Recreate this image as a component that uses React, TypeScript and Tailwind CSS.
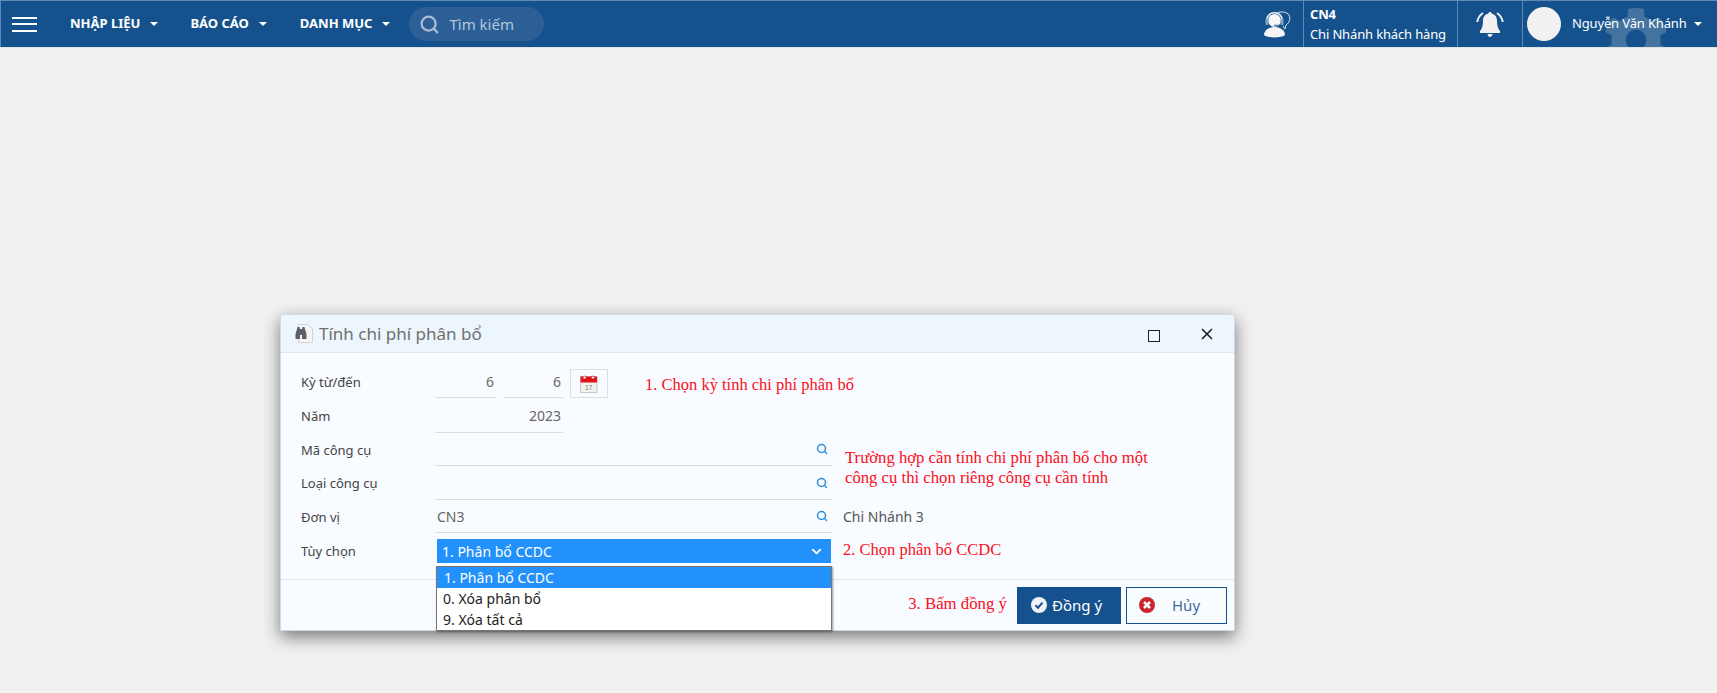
import { ChevronDown, Search, X } from "lucide-react";
import { FaCog } from "react-icons/fa";

const uiFont = "font-['Noto_Sans',sans-serif]";

function Caret() {
  return <span className="ml-[10px] inline-block h-0 w-0 border-x-[4px] border-t-[4px] border-x-transparent border-t-white" />;
}

function SupportIcon() {
  return (
    <svg width="28" height="27" viewBox="0 0 28 27" fill="none">
      <path d="M14 2c4-2 10-1 12 2 2 4 0 8-3 10l-1 4-2-3" stroke="#dbe6f0" strokeWidth="1" />
      <circle cx="11.500" cy="9.500" r="6.500" fill="#f4f6f8" />
      <path d="M3.500 10c0-11 16-11 16 0" stroke="#e7eef5" strokeWidth="1.600" />
      <rect x="2.500" y="8" width="3" height="6" rx="1.200" fill="#7fa2c4" />
      <rect x="17.500" y="8" width="3" height="6" rx="1.200" fill="#7fa2c4" />
      <path d="M11 14.500h5" stroke="#4d7eab" strokeWidth="1.500" />
      <path d="M1 24c0-5 5-8 10.500-8S22 19 22 24c-3 3.200-18 3.200-21 0Z" fill="#f4f6f8" />
    </svg>
  );
}

function BellIcon() {
  return (
    <svg width="28" height="27" viewBox="0 0 28 27" fill="#f1f1f1">
      <path d="M14 1c1 0 1.600.6 1.700 1.500 3.500.8 5.300 3.700 5.300 7.500 0 5 1.200 8 3 10v2H4v-2c1.800-2 3-5 3-10 0-3.800 1.800-6.700 5.300-7.500.1-.9.700-1.500 1.700-1.500Z" />
      <path d="M11.500 23h5c-.3 1.900-1.300 3-2.500 3s-2.200-1.100-2.500-3Z" />
      <path d="M7 2C4 4 1.800 7 1.300 11M21 2c3 2 5.200 5 5.700 9" stroke="#f1f1f1" strokeWidth="2" fill="none" />
    </svg>
  );
}

function DocIcon() {
  return (
    <svg width="18" height="19" viewBox="0 0 18 19">
      <path d="M3.500 .5h9.500l4.500 4.500v13.500h-14Z" fill="#f5f6f5" stroke="#d2d3cf" />
      <path d="M.5 10l1.500-5 .5-2h2l.5 2h2l.5-2h2l.5 2 1.500 5v5H7V11H5v4H.5Z" fill="#5d6166" />
    </svg>
  );
}

function CalendarIcon() {
  return (
    <svg width="18" height="18" viewBox="0 0 18 18">
      <rect x=".5" y="1.500" width="16.500" height="16" fill="#f1f1ee" stroke="#c8c8c8" />
      <rect x=".5" y="1.500" width="16.500" height="6" fill="#e3131c" />
      <circle cx="4.500" cy="2.500" r="1.500" fill="#fff" stroke="#b20d14" strokeWidth=".6" />
      <circle cx="13" cy="2.500" r="1.500" fill="#fff" stroke="#b20d14" strokeWidth=".6" />
      <text x="8.700" y="15" fontSize="6.500" textAnchor="middle" fill="#777" fontFamily="Liberation Sans, sans-serif">17</text>
    </svg>
  );
}

function NavBar() {
  return (
    <header className="flex h-[47px] items-center border-l border-t border-[#5f8ab3] bg-[#15528d] text-white">
      <div className="ml-[11px] flex h-[15px] w-[25px] flex-col justify-between">
        <span className="h-[2px] bg-white" />
        <span className="h-[2px] bg-white" />
        <span className="h-[2px] bg-white" />
      </div>
      <nav className="ml-[33px] flex items-center text-[13px] font-bold">
        <span className="flex items-center">NHẬP LIỆU<Caret /></span>
        <span className="ml-[32px] flex items-center">BÁO CÁO<Caret /></span>
        <span className="ml-[33px] flex items-center">DANH MỤC<Caret /></span>
      </nav>
      <div className="ml-[19px] flex h-[34px] w-[135px] items-center rounded-[17px] bg-[#2b5f96] pl-[10px] text-[15px] text-[#b4c7dc]">
        <Search size={21} strokeWidth={2.5} className="text-[#a9bed5]" />
        <span className="ml-[9px]">Tìm kiếm</span>
      </div>
      <div className="relative ml-auto flex h-full items-center">
        <div className="mr-[12px] mt-[1px]"><SupportIcon /></div>
        <div className="flex h-full w-[155px] flex-col justify-center border-x border-[#5f8ab3] pl-[6px] text-[13px] leading-[20px] tracking-[-0.15px]">
          <span className="font-bold">CN4</span>
          <span>Chi Nhánh khách hàng</span>
        </div>
        <div className="flex h-full w-[65px] items-center justify-center border-r border-[#5f8ab3]"><BellIcon /></div>
        <div className="relative flex h-full w-[194px] items-center overflow-hidden">
          <FaCog size={66} className="absolute left-[80px] top-[6px] text-[#44739f]" />
          <span className="relative ml-[4px] h-[34px] w-[34px] rounded-full bg-[#f1f1f1]" />
          <span className="relative ml-[11px] text-[13px] tracking-[-0.15px]">Nguyễn Văn Khánh</span>
          <span className="relative -ml-[3px] -mt-[1px] flex"><Caret /></span>
        </div>
      </div>
    </header>
  );
}

function Field({ label, rowClass, value, info }: { label: string; rowClass: string; value?: string; info?: string }) {
  return (
    <div className={`flex items-center ${rowClass}`}>
      <span className="w-[134px] shrink-0 pt-[2px]">{label}</span>
      <div className="flex h-full w-[398px] items-center justify-between border-b border-[#dedede] pl-[2px] pr-[5px]">
        <span className="text-[14px] text-[#666]">{value}</span>
        <Search size={12} strokeWidth={3} className="text-[#2f8fdc]" />
      </div>
      {info && <span className="ml-[10px] text-[14px] text-[#555]">{info}</span>}
    </div>
  );
}

function Dialog() {
  return (
    <div className={`absolute left-[280px] top-[314px] w-[955px] border border-[#cfdbe4] bg-[#f8fbff] text-[13px] text-[#444] shadow-[0_6px_16px_rgba(0,0,0,0.5)] ${uiFont}`}>
      <div className="flex h-[38px] items-center border-b border-[#e2e4e6] bg-[#edf6fd] pl-[14px]">
        <DocIcon />
        <span className="ml-[6px] text-[17px] text-[#6f6f6f]">Tính chi phí phân bổ</span>
        <div className="ml-auto mt-[4px] h-[12px] w-[12px] border-[1.5px] border-[#222]" />
        <X size={18} strokeWidth={2.2} className="ml-[38px] mr-[18px] text-[#222]" />
      </div>

      <div className="relative px-[20px] pb-[10px] pt-[11px]">
        <div className="flex h-[34px] items-center">
          <span className="w-[134px] shrink-0 pt-[4px]">Kỳ từ/đến</span>
          <div className="flex h-full w-[61px] items-center justify-end border-b border-[#dedede] pr-[2px] pt-[1px] text-[14px] text-[#666]">6</div>
          <div className="ml-[7px] flex h-full w-[60px] items-center justify-end border-b border-[#dedede] pr-[2px] pt-[1px] text-[14px] text-[#666]">6</div>
          <div className="ml-[7px] flex h-[29px] w-[38px] items-center justify-center self-end border border-[#dedede]"><CalendarIcon /></div>
          <span className="ml-[37px] pt-[9px] font-['Liberation_Serif',serif] text-[16.5px] text-[#fb0f22]">1. Chọn kỳ tính chi phí phân bổ</span>
        </div>
        <div className="flex h-[35px] items-center">
          <span className="w-[134px] shrink-0 pt-[2px]">Năm</span>
          <div className="flex h-full w-[128px] items-center justify-end border-b border-[#dedede] pr-[2px] text-[14px] text-[#666]">2023</div>
        </div>
        <Field label="Mã công cụ" rowClass="h-[33px]" />
        <Field label="Loại công cụ" rowClass="h-[34px]" />
        <Field label="Đơn vị" rowClass="h-[33px]" value="CN3" info="Chi Nhánh 3" />
        <div className="flex h-[36px] items-center">
          <span className="w-[134px] shrink-0 pt-[2px]">Tùy chọn</span>
          <div className="ml-[2px] flex h-[24px] w-[394px] items-center justify-between bg-[#2391fb] pl-[5px] pr-[7px] text-[14px] text-white">
            <span>1. Phân bổ CCDC</span>
            <ChevronDown size={15} strokeWidth={3} />
          </div>
          <span className="ml-[12px] pb-[2px] font-['Liberation_Serif',serif] text-[16.5px] text-[#fb0f22]">2. Chọn phân bổ CCDC</span>
        </div>

        <p className="absolute left-[564px] top-[95px] font-['Liberation_Serif',serif] text-[16.7px] leading-[20px] text-[#fb0f22]">
          Trường hợp cần tính chi phí phân bổ cho một
          <br />
          công cụ thì chọn riêng công cụ cần tính
        </p>

        <div className="absolute left-[155px] top-[213px] z-10 h-[65px] w-[396px] border border-[#767676] bg-white text-[14px] text-[#222] shadow-[1px_1px_2px_rgba(0,0,0,0.4)]">
          <div className="flex h-[21px] items-center bg-[#2391fb] pl-[7px] text-white">1. Phân bổ CCDC</div>
          <div className="flex h-[21px] items-center pl-[6px]">0. Xóa phân bổ</div>
          <div className="flex h-[21px] items-center pl-[6px]">9. Xóa tất cả</div>
        </div>
      </div>

      <div className="flex h-[51px] items-center justify-end border-t border-[#e2e4e6] pr-[7px]">
        <span className="pb-[3px] font-['Liberation_Serif',serif] text-[16.8px] text-[#fb0f22]">3. Bấm đồng ý</span>
        <button className="ml-[10px] flex h-[37px] w-[104px] items-center bg-[#15528d] pl-[14px] text-[15px] text-white">
          <svg width="16" height="16" viewBox="0 0 16 16" className="mr-[5px]">
            <circle cx="8" cy="8" r="8" fill="#eef2f6" />
            <path d="M4.500 8.200l2.500 2.500 4.500-5" stroke="#15528d" strokeWidth="2" fill="none" />
          </svg>
          Đồng ý
        </button>
        <button className="ml-[5px] flex h-[37px] w-[101px] items-center border border-[#15528d] pl-[12px] text-[15px] text-[#3f6c9b]">
          <svg width="16" height="16" viewBox="0 0 16 16" className="mr-[17px]">
            <circle cx="8" cy="8" r="8" fill="#c9252c" />
            <path d="M5 5l6 6M11 5l-6 6" stroke="#fff" strokeWidth="2.500" />
          </svg>
          Hủy
        </button>
      </div>
    </div>
  );
}

export default function App() {
  return (
    <div className={`relative h-[693px] w-[1717px] overflow-hidden bg-[#f1f1f1] ${uiFont}`}>
      <NavBar />
      <div className="h-px bg-[#dfe3e6]" />
      <Dialog />
    </div>
  );
}
